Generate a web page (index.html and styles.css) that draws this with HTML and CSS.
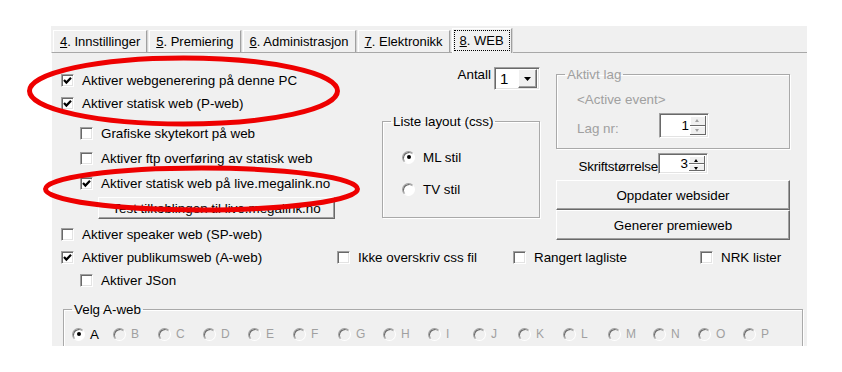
FILE: index.html
```html
<!DOCTYPE html>
<html lang="no">
<head>
  <meta charset="UTF-8">
  <title>Innstillinger – WEB</title>
  <link rel="stylesheet" href="styles.css">
</head>
<body>
  <div class="window">
    <div class="tabs">
      <div class="tab"><u>4</u>. Innstillinger</div>
      <div class="tab"><u>5</u>. Premiering</div>
      <div class="tab"><u>6</u>. Administrasjon</div>
      <div class="tab"><u>7</u>. Elektronikk</div>
      <div class="tab tab-active"><span class="focus"><u>8</u>. WEB</span></div>
    </div>

    <div class="panel">
      <div class="top">
        <div class="col-left">
          <div class="check"><span class="box checked"><svg viewBox="0 0 9 9"><polyline points="1,4 3.4,6.6 8,1.8"/></svg></span>Aktiver webgenerering på denne PC</div>
          <div class="check"><span class="box checked"><svg viewBox="0 0 9 9"><polyline points="1,4 3.4,6.6 8,1.8"/></svg></span>Aktiver statisk web (P-web)</div>
          <div class="sub">
            <div class="check"><span class="box"></span>Grafiske skytekort på web</div>
            <div class="check"><span class="box"></span>Aktiver ftp overføring av statisk web</div>
            <div class="check"><span class="box checked"><svg viewBox="0 0 9 9"><polyline points="1,4 3.4,6.6 8,1.8"/></svg></span>Aktiver statisk web på live.megalink.no</div>
            <button class="btn btn-test">Test tilkoblingen til live.megalink.no</button>
          </div>
          <div class="check speaker"><span class="box"></span>Aktiver speaker web (SP-web)</div>
        </div>

        <div class="col-mid">
          <div class="antall">
            <span class="antall-label">Antall</span>
            <div class="combo">
              <span class="combo-value">1</span>
              <span class="combo-drop"><svg viewBox="0 0 7 4"><polygon points="0,0 7,0 3.5,4"/></svg></span>
            </div>
          </div>
          <fieldset class="group layout">
            <legend>Liste layout (css)</legend>
            <div class="option"><span class="radio checked"></span>ML stil</div>
            <div class="option"><span class="radio"></span>TV stil</div>
          </fieldset>
        </div>

        <div class="col-right">
          <fieldset class="group aktivt">
            <legend>Aktivt lag</legend>
            <div class="event">&lt;Active event&gt;</div>
            <div class="lag">
              <span class="lag-label">Lag nr:</span>
              <div class="spin spin-tall spin-off">
                <span class="spin-value">1</span>
                <span class="spin-btns"><span class="up"></span><span class="down"></span></span>
              </div>
            </div>
          </fieldset>
          <div class="fontsize">
            <span class="fontsize-label">Skriftstørrelse</span>
            <div class="spin">
              <span class="spin-value">3</span>
              <span class="spin-btns"><span class="up"></span><span class="down"></span></span>
            </div>
          </div>
          <button class="btn btn-wide">Oppdater websider</button>
          <button class="btn btn-wide">Generer premieweb</button>
        </div>
      </div>

      <div class="row-web">
        <div class="check cell-publikum"><span class="box checked"><svg viewBox="0 0 9 9"><polyline points="1,4 3.4,6.6 8,1.8"/></svg></span>Aktiver publikumsweb (A-web)</div>
        <div class="check cell-css"><span class="box"></span>Ikke overskriv css fil</div>
        <div class="check cell-rang"><span class="box"></span>Rangert lagliste</div>
        <div class="check"><span class="box"></span>NRK lister</div>
      </div>
      <div class="check json"><span class="box"></span>Aktiver JSon</div>

      <fieldset class="group velg">
        <legend>Velg A-web</legend>
        <div class="letters">
          <div class="letter on"><span class="radio checked"></span>A</div>
          <div class="letter"><span class="radio"></span>B</div>
          <div class="letter"><span class="radio"></span>C</div>
          <div class="letter"><span class="radio"></span>D</div>
          <div class="letter"><span class="radio"></span>E</div>
          <div class="letter"><span class="radio"></span>F</div>
          <div class="letter"><span class="radio"></span>G</div>
          <div class="letter"><span class="radio"></span>H</div>
          <div class="letter"><span class="radio"></span>I</div>
          <div class="letter"><span class="radio"></span>J</div>
          <div class="letter"><span class="radio"></span>K</div>
          <div class="letter"><span class="radio"></span>L</div>
          <div class="letter"><span class="radio"></span>M</div>
          <div class="letter"><span class="radio"></span>N</div>
          <div class="letter"><span class="radio"></span>O</div>
          <div class="letter"><span class="radio"></span>P</div>
        </div>
      </fieldset>
    </div>
  </div>

  <!-- red markings drawn over the screenshot -->
  <svg class="marks" width="842" height="372" viewBox="0 0 842 372">
    <ellipse cx="183.5" cy="91" rx="154" ry="33"/>
    <ellipse cx="201.5" cy="189" rx="156" ry="21"/>
  </svg>
</body>
</html>
```

FILE: styles.css
```css
body {
  margin: 0;
  background: #fff;
  font-family: 'Liberation Sans', Arial, sans-serif;
  font-size: 13.4px;
  color: #000;
  position: relative;
  width: 842px;
  height: 372px;
  overflow: hidden;
}

.window {
  margin: 26px 0 0 51px;
  width: 756px;
  height: 320px;
  background: #f0f0f0;
  overflow: hidden;
}

/* tabs */

.tabs {
  display: flex;
  align-items: flex-end;
  gap: 2px;
  height: 26px;
  padding-left: 2px;
  font-size: 13px;
}

.tab {
  height: 22px;
  line-height: 22px;
  padding: 0 6px;
  box-sizing: border-box;
  border-top: 1px solid #fff;
  border-left: 1px solid #fff;
  border-right: 1px solid #a0a0a0;
  box-shadow: 1px 0 0 #d4d4d4;
  white-space: nowrap;
}

.tab-active {
  height: 25px;
  margin-bottom: -1px;
  padding: 2px 2px 0;
  background: #f0f0f0;
  position: relative;
  z-index: 1;
  line-height: 19px;
}

.focus {
  display: block;
  padding: 0 5px;
  outline: 1px dotted #000;
  outline-offset: 0;
}

.panel {
  border-top: 1px solid #a8a8a8;
  border-left: 1px solid #fff;
  padding-left: 9px;
  height: 300px;
}

/* checkboxes and radios */

.check {
  display: flex;
  align-items: center;
  gap: 8px;
  height: 23px;
  white-space: nowrap;
}

.box {
  width: 13px;
  height: 13px;
  box-sizing: border-box;
  flex: none;
  background: #fff;
  border: 1px solid;
  border-color: #a0a0a0 #fff #fff #a0a0a0;
  box-shadow: inset 1px 1px 0 #696969, inset -1px -1px 0 #e3e3e3;
  display: flex;
  align-items: center;
  justify-content: center;
}

.box svg {
  width: 9px;
  height: 9px;
}

.box polyline {
  fill: none;
  stroke: #000;
  stroke-width: 2.2;
}

.radio {
  width: 13px;
  height: 13px;
  box-sizing: border-box;
  flex: none;
  border-radius: 50%;
  background: #fff;
  border: 1px solid;
  border-color: #a0a0a0 #fff #fff #a0a0a0;
  box-shadow: inset 1px 1px 0 #696969;
  position: relative;
}

.radio.checked::after {
  content: "";
  position: absolute;
  left: 3.5px;
  top: 3.5px;
  width: 4px;
  height: 4px;
  border-radius: 50%;
  background: #000;
}

/* left column */

.top {
  display: flex;
}

.col-left {
  width: 276px;
  padding-top: 16px;
}

.sub {
  margin-top: 6px;
  padding-left: 19px;
}

.sub .check {
  height: 25px;
}

.speaker {
  margin-top: 4px;
}

.btn {
  font: inherit;
  color: #000;
  background: #f0f0f0;
  border: 1px solid;
  border-color: #fff #696969 #696969 #fff;
  box-shadow: inset -1px -1px 0 #a0a0a0;
  padding: 0;
  display: block;
}

.btn-test {
  margin: 1px 0 0 18px;
  width: 237px;
  height: 22px;
}

/* middle column */

.col-mid {
  width: 219px;
  padding-top: 14px;
}

.antall {
  display: flex;
  justify-content: flex-end;
  align-items: flex-start;
  gap: 3px;
  padding-right: 16px;
}

.antall-label {
  line-height: 16px;
}

.combo {
  width: 46px;
  height: 23px;
  box-sizing: border-box;
  background: #fff;
  border: 1px solid;
  border-color: #a0a0a0 #fff #fff #a0a0a0;
  box-shadow: inset 1px 1px 0 #696969, inset -1px -1px 0 #e3e3e3;
  display: flex;
  align-items: center;
  padding: 2px;
}

.combo-value {
  flex: 1;
  padding-left: 3px;
  font-size: 15px;
}

.combo-drop {
  width: 19px;
  height: 19px;
  box-sizing: border-box;
  background: #f0f0f0;
  border: 1px solid;
  border-color: #fff #696969 #696969 #fff;
  box-shadow: inset -1px -1px 0 #a0a0a0;
  display: flex;
  align-items: center;
  justify-content: center;
}

.combo-drop svg {
  width: 7px;
  height: 4px;
}

.group {
  margin: 0;
  padding: 0 8px;
  border: 1px solid #a9a9a9;
  box-shadow: inset 1px 1px 0 #fff, 1px 1px 0 #fff;
  min-width: 0;
}

.group legend {
  padding: 0 2px;
  line-height: 15px;
}

.layout {
  margin: 24px 0 0 45px;
  width: 158px;
  height: 104px;
  box-sizing: border-box;
}

.option {
  display: flex;
  align-items: center;
  gap: 8px;
  height: 20px;
  margin: 18px 0 0 11px;
}

.option + .option {
  margin-top: 12px;
}

/* right column */

.col-right {
  width: 234px;
  padding-top: 14px;
}

.aktivt {
  height: 82px;
  box-sizing: border-box;
  color: #a0a0a0;
}

.event {
  line-height: 16px;
  margin: 10px 0 0 12px;
}

.lag {
  display: flex;
  align-items: flex-start;
  margin: 5px 0 0 12px;
}

.lag-label {
  width: 82px;
  margin-top: 8px;
  line-height: 16px;
}

.spin {
  width: 50px;
  height: 21px;
  box-sizing: border-box;
  background: #fff;
  color: #000;
  border: 1px solid;
  border-color: #a0a0a0 #fff #fff #a0a0a0;
  box-shadow: inset 1px 1px 0 #696969, inset -1px -1px 0 #e3e3e3;
  display: flex;
  padding: 2px;
}

.spin-tall {
  height: 25px;
}

.spin-value {
  flex: 1;
  text-align: right;
  padding-right: 1px;
  line-height: 16px;
}

.spin-tall .spin-value {
  line-height: 20px;
}

.spin-btns {
  width: 16px;
  display: flex;
  flex-direction: column;
}

.spin-btns span {
  flex: 1;
  background: #f0f0f0;
  border-right: 1px solid #696969;
  border-bottom: 1px solid #696969;
  box-shadow: inset 1px 1px 0 #fff;
  position: relative;
}

.spin-btns span::after {
  content: "";
  position: absolute;
  left: 5px;
  border-left: 2.5px solid transparent;
  border-right: 2.5px solid transparent;
}

.spin-btns .up::after {
  top: 3px;
  border-bottom: 3px solid #000;
}

.spin-btns .down::after {
  top: 3px;
  border-top: 3px solid #000;
}

.spin-off .spin-btns span::after {
  border-top-color: #a0a0a0;
  border-bottom-color: #a0a0a0;
}

.fontsize {
  display: flex;
  justify-content: flex-end;
  align-items: flex-start;
  margin-top: 4px;
  padding-right: 82px;
}

.fontsize-label {
  margin-top: 6px;
  line-height: 16px;
  letter-spacing: -0.2px;
}

.btn-wide {
  width: 234px;
  height: 30px;
}

.fontsize + .btn-wide {
  margin-top: 5px;
}

/* bottom rows */

.row-web {
  display: flex;
}

.cell-publikum {
  width: 276px;
}

.cell-css {
  width: 176px;
}

.cell-rang {
  width: 187px;
}

.json {
  padding-left: 19px;
}

.velg {
  margin: 10px 0 0 2px;
  width: 740px;
  height: 60px;
  box-sizing: border-box;
}

.letters {
  display: grid;
  grid-template-columns: 41px repeat(15, 45px);
  margin-top: 7px;
}

.letter {
  display: flex;
  align-items: center;
  gap: 5px;
  height: 20px;
  font-size: 12px;
  color: #a0a0a0;
}

.letter .radio {
  background: #f0f0f0;
}

.letter.on {
  color: #000;
  font-size: 13.4px;
}

.letter.on .radio {
  background: #fff;
}

/* overlay */

.marks {
  position: absolute;
  left: 0;
  top: 0;
  pointer-events: none;
}

.marks ellipse {
  fill: none;
  stroke: #ee0000;
  stroke-width: 5;
}
```
